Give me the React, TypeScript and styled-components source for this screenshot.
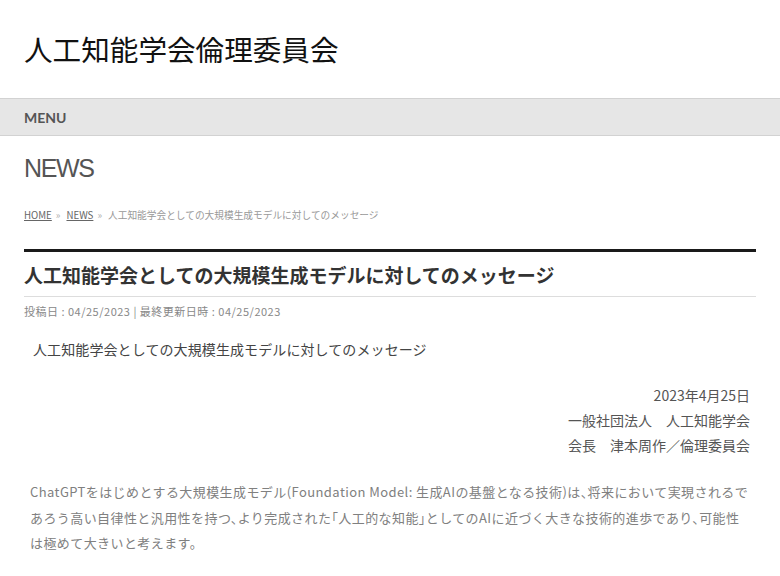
import React from 'react';
import styled, { createGlobalStyle } from 'styled-components';

const GlobalStyle = createGlobalStyle`
  html, body {
    margin: 0;
    padding: 0;
    background: #fff;
  }
  body {
    font-family: "Noto Sans CJK JP", "Noto Sans", sans-serif;
    color: #333;
  }
`;

const JP = `"Noto Sans CJK JP", "Noto Sans", sans-serif`;

const crumbs = [
  { label: 'HOME', link: true },
  { label: 'NEWS', link: true },
  { label: '人工知能学会としての大規模生成モデルに対してのメッセージ', link: false },
];

const signature = ['2023年4月25日', '一般社団法人　人工知能学会', '会長　津本周作／倫理委員会'];

const App = () => {
  return (
    <>
      <GlobalStyle />
      <SHeader>
        <SSiteTitle>人工知能学会倫理委員会</SSiteTitle>
      </SHeader>
      <SMenuBar>
        <SMenuLabel>MENU</SMenuLabel>
      </SMenuBar>
      <SMain>
        <SPageTitle>NEWS</SPageTitle>
        <SBreadcrumb>
          {crumbs.map(({ label, link }, i) => (
            <React.Fragment key={label}>
              {link ? <SCrumbLink>{label}</SCrumbLink> : <span>{label}</span>}
              {i < crumbs.length - 1 && <SCrumbSep>»</SCrumbSep>}
            </React.Fragment>
          ))}
        </SBreadcrumb>
        <SArticleHead>
          <SArticleTitle>人工知能学会としての大規模生成モデルに対してのメッセージ</SArticleTitle>
        </SArticleHead>
        <SMeta>投稿日 : 04/25/2023 | 最終更新日時 : 04/25/2023</SMeta>
        <SLead>人工知能学会としての大規模生成モデルに対してのメッセージ</SLead>
        <SSignature>
          {signature.map((line) => (
            <div key={line}>{line}</div>
          ))}
        </SSignature>
        <SBody>
          ChatGPTをはじめとする大規模生成モデル(Foundation Model: 生成AIの基盤となる技術)は、将来において実現されるであろう高い自律性と汎用性を持つ、より完成された「人工的な知能」としてのAIに近づく大きな技術的進歩であり、可能性は極めて大きいと考えます。
        </SBody>
      </SMain>
    </>
  );
};

const SHeader = styled.header`
  height: 98px;
  display: flex;
  align-items: center;
  padding: 0 24px;
`;

const SSiteTitle = styled.h1`
  margin: 0;
  font-family: ${JP};
  font-weight: 400;
  font-size: 28.6px;
  color: #111;
  line-height: 1;
`;

const SMenuBar = styled.nav`
  height: 36px;
  display: flex;
  align-items: center;
  padding: 0 24px;
  background: #e6e6e6;
  border-top: 1px solid #d2d2d2;
  border-bottom: 1px solid #d2d2d2;
`;

const SMenuLabel = styled.span`
  font-family: Lato, "Open Sans", sans-serif;
  font-weight: 700;
  font-size: 14px;
  color: #555;
`;

const SMain = styled.main`
  padding: 12px 24px 0;
`;

const SPageTitle = styled.h2`
  margin: 0;
  font-family: "Liberation Sans", Arial, sans-serif;
  font-weight: 400;
  font-size: 25px;
  letter-spacing: -1.4px;
  line-height: 40px;
  color: #555;
`;

const SBreadcrumb = styled.div`
  margin-top: 19px;
  font-family: ${JP};
  font-size: 9.7px;
  line-height: 16px;
  color: #999;
`;

const SCrumbLink = styled.a`
  color: #666;
  text-decoration: underline;
`;

const SCrumbSep = styled.span`
  margin: 0 6px 0 4px;
  color: #aaa;
`;

const SArticleHead = styled.div`
  margin-top: 26px;
  border-top: 3px solid #1a1a1a;
  border-bottom: 1px solid #ddd;
  padding: 9px 0 7px;
`;

const SArticleTitle = styled.h3`
  margin: 0;
  font-family: ${JP};
  font-weight: 700;
  font-size: 19px;
  line-height: 28px;
  color: #333;
`;

const SMeta = styled.div`
  margin-top: 6px;
  font-family: ${JP};
  font-size: 11px;
  letter-spacing: 0.5px;
  line-height: 16px;
  color: #888;
`;

const SLead = styled.p`
  margin: 20px 0 0;
  padding-left: 9px;
  font-family: ${JP};
  font-size: 14px;
  letter-spacing: 0.1px;
  line-height: 20px;
  color: #444;
`;

const SSignature = styled.div`
  margin-top: 24px;
  padding-right: 6px;
  text-align: right;
  font-family: ${JP};
  font-size: 14px;
  line-height: 25px;
  color: #555;
`;

const SBody = styled.p`
  margin: 21px 0 0;
  padding: 0 6px;
  font-family: ${JP};
  font-size: 13px;
  font-feature-settings: "halt";
  letter-spacing: 0.42px;
  line-height: 25.5px;
  color: #808080;
`;

export default App;
